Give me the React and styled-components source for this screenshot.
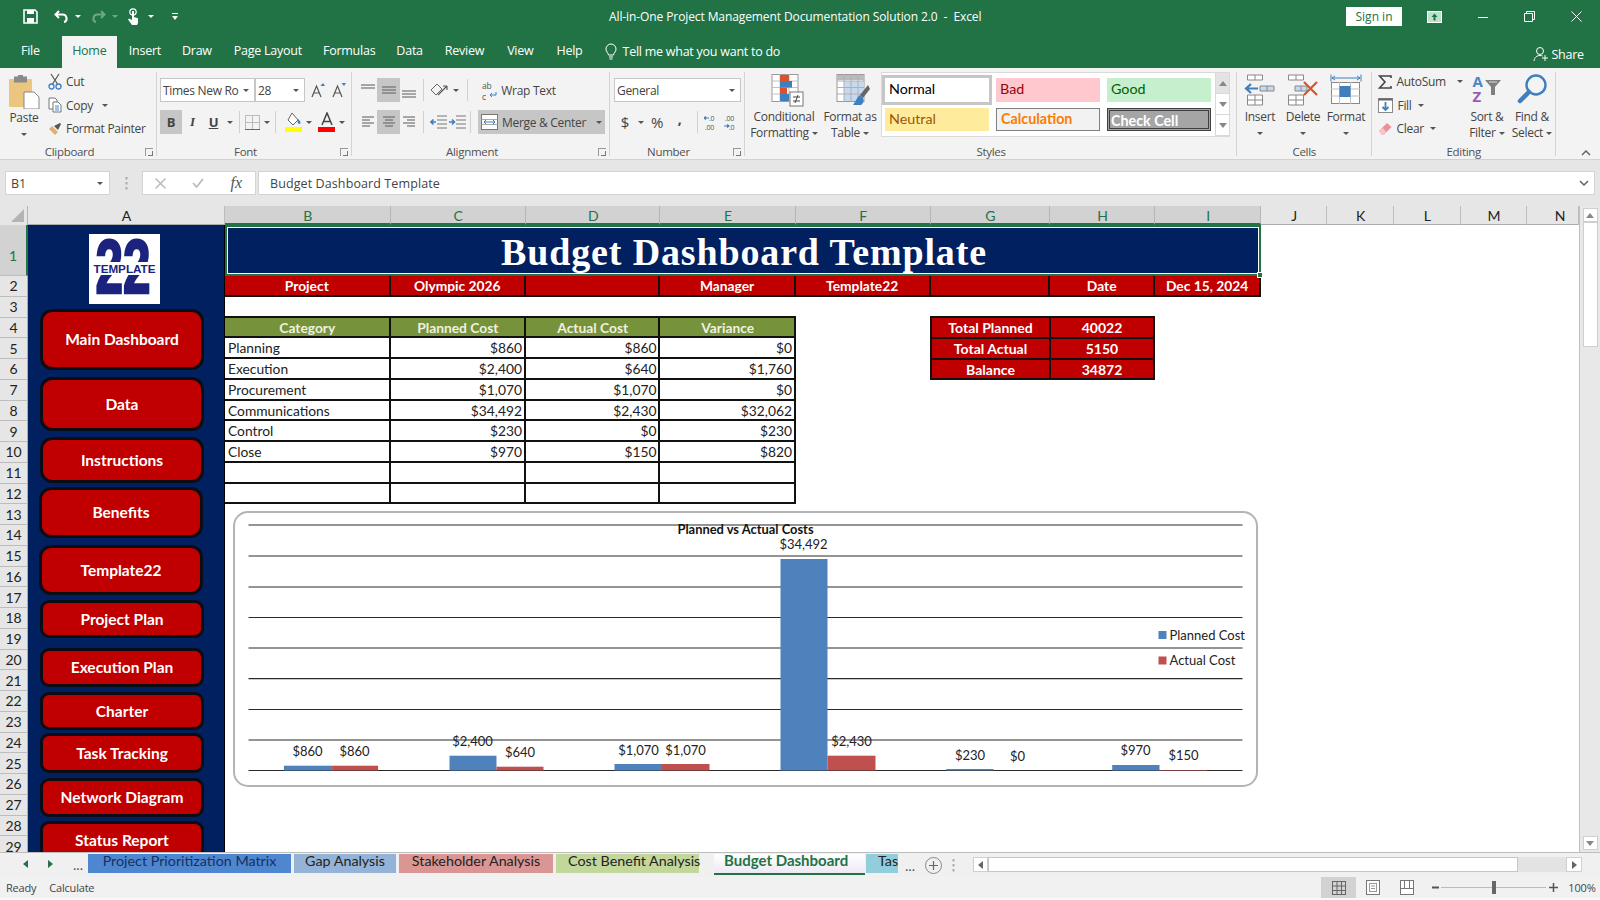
import React from "react";
import styled, { createGlobalStyle } from "styled-components";

const UI = '"Open Sans", "Noto Sans", sans-serif';
const CELL = 'Lato, "Liberation Sans", sans-serif';
const GREEN = "#217346";
const RED = "#c00000";
const NAVY = "#002060";

const Global = createGlobalStyle`
  html, body { margin: 0; padding: 0; background: #fff; }
  * { box-sizing: border-box; }
`;

const Page = styled.div`
  width: 1600px;
  height: 900px;
  overflow: hidden;
  display: flex;
  flex-direction: column;
  font-family: ${UI};
  background: #f1f1f1;
`;

/* ---------- title bar ---------- */
const TitleBar = styled.div`
  height: 36px;
  background: ${GREEN};
  display: flex;
  align-items: center;
  color: #fff;
  padding: 0 0 3px 23px;
`;
const Qat = styled.div`
  width: 586px;
  display: flex;
  align-items: center;
`;
const QatSlot = styled.span`
  display: flex;
  align-items: center;
  margin-right: ${(p) => p.$gap || 0}px;
`;
const WinTitle = styled.div`
  width: 737px;
  font-size: 12px;
  letter-spacing: -0.1px;
  white-space: nowrap;
`;
const SignIn = styled.div`
  width: 56px;
  height: 19px;
  background: #fff;
  color: ${GREEN};
  font-size: 12px;
  text-align: center;
  line-height: 19px;
  margin-right: 25px;
`;
const WinBtns = styled.div`
  display: flex;
  align-items: center;
  gap: 36px;
`;

/* ---------- tab row ---------- */
const TabRow = styled.div`
  height: 32px;
  background: ${GREEN};
  display: flex;
  align-items: flex-end;
  padding-left: 21px;
  color: #fff;
  font-size: 12.5px;
  letter-spacing: -0.25px;
`;
const RibbonTab = styled.div`
  height: 32px;
  line-height: 30px;
  white-space: nowrap;
  margin-right: ${(p) => p.$gap}px;
  ${(p) =>
    p.$active &&
    `background:#f3f3f3;color:${GREEN};width:55px;text-align:center;`}
`;
const TellMe = styled.div`
  display: flex;
  align-items: center;
  gap: 6px;
  height: 30px;
  align-self: flex-start;
  width: 928px;
  white-space: nowrap;
`;
const Share = styled.div`
  display: flex;
  align-items: center;
  gap: 3px;
  height: 32px;
  align-self: flex-start;
  padding-top: 4px;
`;

/* ---------- ribbon ---------- */
const Ribbon = styled.div`
  height: 92px;
  background: #f3f3f3;
  border-bottom: 1px solid #d2d2d2;
  display: flex;
  font-size: 12px;
  letter-spacing: -0.3px;
  color: #444;
`;
const Group = styled.div`
  width: ${(p) => p.$w}px;
  position: relative;
  display: flex;
  flex-direction: column;
  &::after {
    content: "";
    position: absolute;
    right: 0;
    top: 4px;
    bottom: 3px;
    width: 1px;
    background: ${(p) => (p.$plain ? "transparent" : "#d4d4d4")};
  }
`;
const GroupBody = styled.div`
  height: 76px;
  display: flex;
  padding-left: ${(p) => p.$pad || 0}px;
`;
const GroupLabel = styled.div`
  text-align: center;
  font-size: 11.5px;
  line-height: 15px;
  color: #505050;
  padding-right: ${(p) => p.$right || 0}px;
  padding-left: ${(p) => p.$leftPad || 0}px;
`;
const Launcher = styled.span`
  position: absolute;
  right: 4px;
  bottom: 3px;
  width: 8px;
  height: 8px;
  border-left: 1px solid #999;
  border-top: 1px solid #999;
  &::after {
    content: "";
    position: absolute;
    right: 0;
    bottom: 0;
    width: 4px;
    height: 4px;
    border-right: 1px solid #777;
    border-bottom: 1px solid #777;
  }
`;
const Caret = styled.span`
  display: inline-block;
  width: 0;
  height: 0;
  margin-left: ${(p) => p.$left || 0}px;
  border-left: 3px solid transparent;
  border-right: 3px solid transparent;
  border-top: 3px solid ${(p) => p.$color || "#555"};
  vertical-align: middle;
`;
const CaretLine = styled.div`
  height: 16px;
  line-height: 16px;
  text-align: center;
  white-space: nowrap;
`;
const BigBtn = styled.div`
  width: ${(p) => p.$w}px;
  margin-left: ${(p) => p.$left || 0}px;
  display: flex;
  flex-direction: column;
  align-items: center;
  padding-top: ${(p) => p.$top ?? 6}px;
  line-height: 16px;
  white-space: nowrap;
`;
const BigIcon = styled.div`
  height: 35px;
  padding-left: ${(p) => p.$shift || 0}px;
  display: flex;
  align-items: flex-start;
  justify-content: center;
`;
const SmallCol = styled.div`
  display: flex;
  flex-direction: column;
  padding-top: 2px;
  margin-left: ${(p) => p.$left || 0}px;
`;
const SmallRow = styled.div`
  height: 23.5px;
  display: flex;
  align-items: center;
  gap: ${(p) => p.$gap ?? 4}px;
  white-space: nowrap;
`;
const RowsCol = styled.div`
  display: flex;
  flex-direction: column;
  gap: 8px;
  padding-top: 10px;
`;
const ToolRow = styled.div`
  height: 24px;
  display: flex;
  align-items: center;
`;
const Tool = styled.div`
  width: ${(p) => p.$w}px;
  height: 24px;
  margin-left: ${(p) => p.$left || 0}px;
  display: flex;
  align-items: center;
  justify-content: center;
  gap: 4px;
  white-space: nowrap;
  background: ${(p) => (p.$on ? "#c6c6c6" : "transparent")};
`;
const Divider = styled.span`
  width: 1px;
  height: 22px;
  background: #d0d0d0;
  margin: 0 ${(p) => p.$m ?? 6}px;
`;
const Combo = styled.div`
  width: ${(p) => p.$w}px;
  height: 24px;
  background: #fff;
  border: 1px solid #c6c6c6;
  display: flex;
  align-items: center;
  justify-content: space-between;
  padding: 0 5px 0 2px;
  white-space: nowrap;
  overflow: hidden;
`;
const BoldGlyph = styled.span`
  font-family: ${(p) => p.$family || UI};
  font-weight: ${(p) => p.$weight || 700};
  font-style: ${(p) => (p.$italic ? "italic" : "normal")};
  text-decoration: ${(p) => (p.$under ? "underline" : "none")};
  font-size: ${(p) => p.$size || 13}px;
  color: ${(p) => p.$color || "#444"};
  margin-bottom: ${(p) => p.$lift || 0}px;
`;
const Gallery = styled.div`
  width: 349px;
  height: 65px;
  margin: 4px 0 0 3px;
  background: #fff;
  border: 1px solid #d9d9d9;
  display: flex;
`;
const StyleGrid = styled.div`
  width: 333px;
  padding: 5px 3px 3px;
  display: grid;
  grid-template-columns: repeat(3, 104px);
  grid-template-rows: 24px 23px;
  column-gap: 7px;
  row-gap: 6px;
`;
const StyleCell = styled.div`
  background: ${(p) => p.$bg};
  color: ${(p) => p.$fg};
  border: ${(p) => p.$border || "none"};
  font-family: ${CELL};
  font-size: 14.3px;
  letter-spacing: 0;
  font-weight: ${(p) => (p.$bold ? 700 : 400)};
  line-height: ${(p) => (p.$border ? 20 : 22)}px;
  padding-left: ${(p) => p.$pad ?? 4}px;
  box-shadow: ${(p) => p.$ring || "none"};
`;
const GalleryScroll = styled.div`
  flex: 1;
  display: flex;
  flex-direction: column;
  border-left: 1px solid #d9d9d9;
`;
const ScrollCell = styled.div`
  flex: 1;
  display: flex;
  align-items: center;
  justify-content: center;
  background: ${(p) => p.$bg || "#fff"};
  border-bottom: 1px solid #d9d9d9;
`;
const SortGlyphs = styled.div`
  height: 30px;
  display: flex;
  gap: 2px;
  font-family: ${UI};
  font-size: 15px;
  font-weight: 700;
  line-height: 15px;
`;
const SortLetters = styled.div`
  width: 11px;
  display: flex;
  flex-direction: column;
  color: #4a86c5;
`;
const SortZ = styled.span`
  color: #9b59b6;
`;
const FunnelSlot = styled.div`
  padding-top: 6px;
`;

/* ---------- formula bar ---------- */
const FormulaBar = styled.div`
  height: 46px;
  background: #e6e6e6;
  display: flex;
  align-items: center;
  padding-left: 5px;
  font-size: 13px;
  color: #444;
`;
const NameBox = styled.div`
  width: 105px;
  height: 24px;
  background: #fff;
  border: 1px solid #d4d4d4;
  display: flex;
  align-items: center;
  justify-content: space-between;
  padding: 0 6px 0 5px;
  font-size: 12.5px;
`;
const FnDots = styled.div`
  width: 32px;
  display: flex;
  justify-content: center;
`;
const FnBox = styled.div`
  width: 114px;
  height: 24px;
  background: #fff;
  border: 1px solid #d4d4d4;
  display: flex;
  align-items: center;
  justify-content: space-between;
  padding: 0 13px 0 12px;
  margin-right: 2px;
`;
const FnGlyph = styled.span`
  font-family: "Liberation Serif", serif;
  font-style: italic;
  font-size: 16px;
  color: #555;
`;
const FormulaInput = styled.div`
  width: 1337px;
  height: 24px;
  background: #fff;
  border: 1px solid #d4d4d4;
  display: flex;
  align-items: center;
  justify-content: space-between;
  padding: 0 5px 0 11px;
  font-size: 12.5px;
  letter-spacing: 0.1px;
`;

/* ---------- sheet frame ---------- */
const SheetFrame = styled.div`
  height: 646px;
  flex: none;
  display: flex;
`;
const SheetColumn = styled.div`
  width: 1579px;
  flex: none;
  display: flex;
  flex-direction: column;
`;
const ColHeaderRow = styled.div`
  height: 19px;
  flex: none;
  background: #e6e6e6;
  display: flex;
`;
const Corner = styled.div`
  width: 28px;
  position: relative;
  border-right: 1px solid #b5b5b5;
  &::after {
    content: "";
    position: absolute;
    right: 3px;
    bottom: 3px;
    width: 0;
    height: 0;
    border-left: 13px solid transparent;
    border-bottom: 13px solid #b4b4b4;
  }
`;
const ColHead = styled.div`
  width: ${(p) => p.$w}px;
  text-align: center;
  font-family: ${CELL};
  font-size: 14px;
  line-height: 19px;
  padding-left: ${(p) => p.$shift || 1}px;
  color: ${(p) => (p.$on ? GREEN : "#222")};
  background: ${(p) => (p.$on ? "#d2d2d2" : "#e6e6e6")};
  border-right: 1px solid ${(p) => (p.$on ? "#b5b5b5" : "#bdbdbd")};
  border-bottom: ${(p) =>
    p.$on ? `2px solid ${GREEN}` : "1px solid #ababab"};
`;
const SheetBody = styled.div`
  flex: 1;
  min-height: 0;
  display: flex;
  background: #fff;
`;
const RowHeads = styled.div`
  width: 28px;
  flex: none;
  display: flex;
  flex-direction: column;
  overflow: hidden;
`;
const RowHead = styled.div`
  height: ${(p) => p.$h}px;
  flex: none;
  display: flex;
  align-items: center;
  justify-content: center;
  padding-top: ${(p) => (p.$on ? 10 : 0)}px;
  font-family: ${CELL};
  font-size: 14px;
  color: ${(p) => (p.$on ? GREEN : "#222")};
  background: ${(p) => (p.$on ? "#d2d2d2" : "#e6e6e6")};
  border-bottom: 1px solid #bdbdbd;
  border-right: ${(p) =>
    p.$on ? `2px solid ${GREEN}` : "1px solid #ababab"};
`;

/* ---------- sidebar ---------- */
const Sidebar = styled.div`
  width: 197px;
  flex: none;
  background: ${NAVY};
  border-right: 1px solid #000;
  padding-top: 9px;
  overflow: hidden;
  display: flex;
  flex-direction: column;
`;
const LogoBox = styled.div`
  width: 71px;
  height: 70px;
  margin-left: 61px;
  background: #fff;
  flex: none;
`;
const NavButton = styled.div`
  width: 164px;
  height: ${(p) => p.$h}px;
  flex: none;
  margin-top: ${(p) => p.$gap}px;
  margin-left: ${(p) => p.$left}px;
  padding-bottom: 1px;
  background: ${RED};
  border: 3px solid #0c0c14;
  border-radius: ${(p) => (p.$h > 44 ? 12 : 9)}px;
  display: flex;
  align-items: center;
  justify-content: center;
  color: #fff;
  font-family: ${CELL};
  font-weight: 700;
  font-size: 15.5px;
`;

/* ---------- worksheet ---------- */
const Main = styled.div`
  flex: 1;
  min-width: 0;
  display: flex;
  flex-direction: column;
`;
const Banner = styled.div`
  width: 1036px;
  height: 51px;
  flex: none;
  padding-left: 2px;
  background: ${NAVY};
  border: 2px solid ${GREEN};
  outline: 1px solid #fff;
  outline-offset: -3px;
  color: #fff;
  font-family: "Liberation Serif", serif;
  font-weight: 700;
  font-size: 38px;
  letter-spacing: 0.85px;
  text-align: center;
  line-height: 50px;
  position: relative;
`;
const FillHandle = styled.span`
  position: absolute;
  right: -4px;
  bottom: -4px;
  width: 6px;
  height: 6px;
  background: ${GREEN};
  border: 1px solid #fff;
`;
const InfoRow = styled.div`
  width: 1036px;
  height: 21px;
  flex: none;
  display: grid;
  grid-template-columns: 165.6px 135.4px 134.5px 135.2px 134.9px 119.4px 105.5px 105.4px;
  background: ${RED};
  border-bottom: 2px solid #111;
`;
const InfoCell = styled.div`
  color: #fff;
  font-family: ${CELL};
  font-weight: 700;
  font-size: 13.8px;
  text-align: center;
  line-height: 20px;
  border-right: 2px solid #111;
`;
const TablesRow = styled.div`
  display: flex;
  align-items: flex-start;
  margin-top: 19px;
  flex: none;
`;
const DataTable = styled.div`
  width: 571px;
  display: grid;
  grid-template-columns: 165.6px 135.4px 134.5px 135.5px;
  border-top: 2px solid #111;
`;
const Cell = styled.div`
  height: ${(p) => (p.$first ? 20.25 : 20.75)}px;
  font-family: ${CELL};
  font-size: 13.8px;
  color: #222;
  line-height: 20px;
  padding: 0 2px 0 3px;
  text-align: ${(p) => p.$align || "left"};
  white-space: nowrap;
  border-right: 2px solid #111;
  border-bottom: 2px solid #111;
`;
const HeadCell = styled(Cell)`
  background: #76933c;
  color: #f0f0e0;
  font-weight: 700;
  text-align: center;
  line-height: 19px;
`;
const SummaryTable = styled.div`
  width: 225px;
  margin-left: 134px;
  display: grid;
  grid-template-columns: 119px 102px;
  border: 2px solid #111;
  border-bottom: none;
  background: ${RED};
`;
const SummaryCell = styled.div`
  height: 20.75px;
  color: #fff;
  font-family: ${CELL};
  font-size: 14px;
  font-weight: 700;
  text-align: center;
  line-height: 19px;
  border-bottom: 2px solid #111;
  border-right: ${(p) => (p.$left ? "2px solid #111" : "none")};
`;
const ChartBox = styled.div`
  width: 1025.5px;
  height: 276px;
  flex: none;
  margin: 6.75px 0 0 7.5px;
  background: #fff;
  border: 2px solid #b4b4b4;
  border-radius: 15px;
`;
const ChartSvg = styled.svg`
  display: block;
  font-family: ${CELL};
  font-size: 13px;
  fill: #222;
`;

/* ---------- scrollbars ---------- */
const VScroll = styled.div`
  width: 21px;
  flex: none;
  background: #e8e8e8;
  border-left: 1px solid #c0c0c0;
  display: flex;
  flex-direction: column;
  align-items: center;
  padding: 2px 0;
`;
const ScrollBtn = styled.div`
  width: ${(p) => p.$w || 15}px;
  height: ${(p) => p.$h || 14}px;
  margin-${(p) => (p.$axis === "x" ? "left" : "top")}: ${(p) =>
  p.$push ? "auto" : "0"};
  background: #fff;
  border: 1px solid #cfcfcf;
  display: flex;
  align-items: center;
  justify-content: center;
  flex: none;
`;
const VThumb = styled.div`
  width: 15px;
  height: 125px;
  background: #fff;
  border: 1px solid #cfcfcf;
  flex: none;
`;
const Tri = styled.span`
  width: 0;
  height: 0;
  ${(p) =>
    p.$dir === "up"
      ? "border-left:4px solid transparent;border-right:4px solid transparent;border-bottom:5px solid #888;"
      : p.$dir === "down"
      ? "border-left:4px solid transparent;border-right:4px solid transparent;border-top:5px solid #888;"
      : p.$dir === "left"
      ? `border-top:4px solid transparent;border-bottom:4px solid transparent;border-right:5px solid ${
          p.$color || "#666"
        };`
      : `border-top:4px solid transparent;border-bottom:4px solid transparent;border-left:5px solid ${
          p.$color || "#666"
        };`}
`;

/* ---------- sheet tabs ---------- */
const TabBar = styled.div`
  height: 25px;
  background: #f0f0f0;
  border-top: 1px solid #bdbdbd;
  display: flex;
  align-items: flex-start;
  font-family: ${CELL};
  font-size: 14.3px;
  flex: none;
`;
const TabNav = styled.div`
  width: 88px;
  height: 22px;
  display: flex;
  align-items: center;
  padding-left: 23px;
  gap: 20px;
  color: #555;
`;
const SheetTab = styled.div`
  width: ${(p) => p.$w}px;
  height: ${(p) => (p.$active ? 21 : 19)}px;
  margin-top: 1px;
  margin-right: ${(p) => p.$gap ?? 3}px;
  padding-left: ${(p) => p.$pad || 0}px;
  background: ${(p) => (p.$active ? "linear-gradient(#fff, #eee8f5)" : p.$bg)};
  color: ${(p) => (p.$active ? GREEN : p.$fg || "#222")};
  font-weight: ${(p) => (p.$active ? 700 : 400)};
  font-size: ${(p) => (p.$active ? 15 : 14.3)}px;
  text-align: ${(p) => (p.$pad ? "left" : "center")};
  line-height: 13px;
  white-space: nowrap;
  overflow: ${(p) => (p.$spill ? "visible" : "hidden")};
  border-bottom: ${(p) => (p.$active ? `2px solid ${GREEN}` : "none")};
`;
const TabExtras = styled.div`
  display: flex;
  align-items: center;
  height: 24px;
  width: 75px;
  color: #555;
  gap: 10px;
  padding-left: 7px;
`;
const HScroll = styled.div`
  width: 609px;
  height: 15px;
  margin-top: 4px;
  display: flex;
  background: #e3e3e3;
`;
const HThumb = styled.div`
  width: 530px;
  background: #fff;
  border: 1px solid #c6c6c6;
`;

/* ---------- status bar ---------- */
const StatusBar = styled.div`
  height: 23px;
  background: #f1f1f1;
  border-bottom: 2px solid #fbfbfb;
  display: flex;
  align-items: center;
  font-size: 11px;
  letter-spacing: -0.2px;
  color: #444;
  padding-left: 6px;
  flex: none;
`;
const StatusText = styled.span`
  margin-right: ${(p) => p.$gap}px;
`;
const ViewBtn = styled.div`
  width: ${(p) => p.$w}px;
  height: 21px;
  display: flex;
  align-items: center;
  justify-content: center;
  background: ${(p) => (p.$on ? "#d2d2d2" : "transparent")};
`;
const ZoomSlider = styled.div`
  width: 105px;
  height: 1px;
  margin: 0 3px 0 2px;
  background: #bbb;
  position: relative;
`;
const ZoomThumb = styled.span`
  position: absolute;
  left: 51px;
  top: -6px;
  width: 4px;
  height: 13px;
  background: #666;
`;
const ZoomGlyph = styled.span`
  display: flex;
  margin-left: ${(p) => p.$left || 0}px;
  margin-right: ${(p) => p.$right || 0}px;
`;

/* ---------- icons ---------- */
const Svg = ({ w, h, children, ...rest }) => (
  <svg width={w} height={h} viewBox={`0 0 ${w} ${h}`} {...rest}>
    {children}
  </svg>
);
const Lines = ({ rows, w = 16, h = 16, color = "#666" }) => (
  <Svg w={w} h={h}>
    {rows.map(([a, b, y], i) => (
      <line key={i} x1={a} x2={b} y1={y} y2={y} stroke={color} strokeWidth="1.1" />
    ))}
  </Svg>
);
const SaveIcon = () => (
  <Svg w={15} h={15}>
    <path d="M1 1h11l2 2v11H1z" fill="none" stroke="#fff" strokeWidth="1.6" />
    <rect x="4" y="1" width="7" height="4" fill="#fff" />
    <rect x="4" y="9" width="7" height="5" fill="#fff" />
  </Svg>
);
const UndoIcon = ({ color = "#fff", flip }) => (
  <Svg w={15} h={14} transform={flip ? "scale(-1 1)" : undefined}>
    <path
      d="M5 1 1.500 4.500 5 8M2 4.500h6.500a4 4 0 0 1 1.600 7.700"
      fill="none"
      stroke={color}
      strokeWidth="2"
    />
  </Svg>
);
const TouchIcon = () => (
  <Svg w={13} h={18}>
    <circle cx="6" cy="4" r="3.2" fill="none" stroke="#fff" strokeWidth="1.2" />
    <path d="M5 3h2v6l4 1.200V15l-1 2H5L1 11.500l1-1L5 12z" fill="#fff" />
  </Svg>
);
const QatMore = () => (
  <Svg w={8} h={9}>
    <path d="M1 1.500h6" stroke="#fff" strokeWidth="1" />
    <path d="M1 4h6L4 8z" fill="#fff" />
  </Svg>
);
const BoxArrow = () => (
  <Svg w={15} h={12}>
    <rect x=".5" y=".5" width="14" height="11" fill="#bfe0cf" stroke="#fff" />
    <path d="M7.500 2.500 4.500 6H6.500V9.500h2V6h2z" fill={GREEN} />
  </Svg>
);
const WinMin = () => (
  <Svg w={10} h={10}>
    <path d="M0 5.500h10" stroke="#fff" />
  </Svg>
);
const WinRestore = () => (
  <Svg w={11} h={11}>
    <path d="M.5 2.500h8v8h-8zM2.500 2.500v-2h8v8h-2" fill="none" stroke="#fff" />
  </Svg>
);
const WinClose = () => (
  <Svg w={11} h={11}>
    <path d="M.5.5l10 10M10.500.5l-10 10" stroke="#fff" />
  </Svg>
);
const Bulb = () => (
  <Svg w={12} h={17}>
    <path
      d="M3.500 12C3 9.500 1 8.800 1 6a5 5 0 0 1 10 0c0 2.800-2 3.500-2.500 6z"
      fill="none"
      stroke="#fff"
    />
    <path d="M4 14h4M4.500 16h3" stroke="#fff" />
  </Svg>
);
const ShareIcon = () => (
  <Svg w={16} h={16}>
    <circle cx="7" cy="5" r="3.500" fill="none" stroke="#fff" />
    <path d="M1 15c.5-4 3-5.500 6-5.500 1 0 1.800.2 2.500.5" fill="none" stroke="#fff" />
    <path d="M12 9v6M9 12h6" stroke="#fff" />
  </Svg>
);
const PasteIcon = () => (
  <Svg w={32} h={34}>
    <rect x="1" y="4" width="23" height="28" rx="1" fill="#eac67f" />
    <rect x="6" y="1.500" width="13" height="6" fill="#8a8a8a" />
    <rect x="10" y="0" width="5" height="3" fill="#8a8a8a" />
    <path d="M16 17h10l5 5v12H16z" fill="#fff" stroke="#888" />
  </Svg>
);
const CutIcon = () => (
  <Svg w={14} h={17}>
    <path d="M3 1l6.500 10M11 1 4.500 11" stroke="#555" strokeWidth="1.200" />
    <circle cx="3.500" cy="13.500" r="2.500" fill="none" stroke="#3f7fc0" strokeWidth="1.300" />
    <circle cx="10.500" cy="13.500" r="2.500" fill="none" stroke="#3f7fc0" strokeWidth="1.300" />
  </Svg>
);
const CopyIcon = () => (
  <Svg w={14} h={16}>
    <path d="M1 1h6l2 2v9H1z" fill="#fff" stroke="#777" />
    <path d="M5 5h5l3 3v7H5z" fill="#fff" stroke="#777" />
    <path d="M7 9h4M7 11h4M7 13h4" stroke="#4a86c5" />
  </Svg>
);
const PainterIcon = () => (
  <Svg w={14} h={14}>
    <path d="M1 7l6 6 3-3-6-6z" fill="#e0b070" />
    <path d="M6 4l4 4 3-6-1-1z" fill="#555" />
  </Svg>
);
const SizeIcon = ({ up }) => (
  <Svg w={14} h={15}>
    <path d="M1 14 5.500 3 10 14M3 10h5" fill="none" stroke="#555" strokeWidth="1.200" />
    <path d={up ? "M9.500 3l2.500-3 2 3z" : "M9.500 0h4.500l-2 3z"} fill="#3f7fc0" />
  </Svg>
);
const BorderIcon = () => (
  <Svg w={15} h={15}>
    <rect x=".5" y=".5" width="14" height="14" fill="none" stroke="#bbb" />
    <path d="M7.500 0v15M0 7.500h15" stroke="#bbb" />
    <path d="M0 14.500h15" stroke="#666" />
  </Svg>
);
const FillIcon = () => (
  <Svg w={18} h={20}>
    <path d="M7 1l6 7-5 5-5-5z" fill="#fff" stroke="#666" />
    <path d="M13 7c2 2 3 3 2 5-2 0-3-2-2-5z" fill="#3f7fc0" />
    <rect x="0" y="15" width="17" height="5" fill="#ffff00" />
  </Svg>
);
const FontColorIcon = () => (
  <Svg w={18} h={20}>
    <path d="M4 13 9 1l5 12M5.500 9.500h7" fill="none" stroke="#444" strokeWidth="1.500" />
    <rect x="0" y="15" width="17" height="5" fill="#ff0000" />
  </Svg>
);
const OrientIcon = () => (
  <Svg w={20} h={16}>
    <path d="M2 8 8 2l5 5-6 6z" fill="none" stroke="#666" />
    <path d="M9 13 18 4M18 4h-4M18 4v4" fill="none" stroke="#555" strokeWidth="1.100" />
  </Svg>
);
const WrapIcon = () => (
  <Svg w={15} h={21}>
    <text x="0" y="9" fontSize="8.5" fill="#555" fontFamily={UI}>ab</text>
    <text x="0" y="19.500" fontSize="8.5" fill="#555" fontFamily={UI}>c</text>
    <path d="M14 12v3H8M10 13l-2 2 2 2" fill="none" stroke="#3f7fc0" />
  </Svg>
);
const IndentIcon = ({ flip }) => (
  <Svg w={17} h={15}>
    <path d="M7 1h10M7 5h10M7 9h10M7 13h10" stroke="#777" />
    {flip ? (
      <path d="M0 7h5M3 4.500 5.500 7 3 9.500" fill="none" stroke="#3f7fc0" strokeWidth="1.600" />
    ) : (
      <path d="M6 7H1M3.500 4.500 1 7l2.500 2.500" fill="none" stroke="#3f7fc0" strokeWidth="1.600" />
    )}
  </Svg>
);
const MergeIcon = () => (
  <Svg w={17} h={16}>
    <rect x=".5" y=".5" width="16" height="15" fill="#fff" stroke="#777" />
    <path d="M.5 5.500h16M.5 10.500h16" stroke="#aaa" />
    <path d="M3 8h11M5 6 3 8l2 2M12 6l2 2-2 2" fill="none" stroke="#3f7fc0" />
  </Svg>
);
const DecimalIcon = ({ more }) => (
  <Svg w={16} h={18}>
    <text x={more ? 1 : 5} y="8" fontSize="7" fill="#555" fontFamily={UI}>{more ? ".00" : ".0"}</text>
    <text x={more ? 5 : 1} y="17" fontSize="7" fill="#555" fontFamily={UI}>{more ? ".0" : ".00"}</text>
    <path d={more ? "M0 13h5M3 11.500 5 13l-2 1.500" : "M0 5h5M2 3.500 0 5l2 1.500"} fill="none" stroke="#3f7fc0" strokeWidth="1.200" />
  </Svg>
);
const CondIcon = () => (
  <Svg w={34} h={33}>
    <rect x="2" y=".5" width="26" height="27" fill="#fff" stroke="#999" />
    <path d="M2 7h26M2 13.500h26M2 20h26M10 0v28M19 0v28" stroke="#c0c0c0" />
    <rect x="10" y="1" width="9" height="6" fill="#d9532c" />
    <rect x="10" y="7" width="12" height="6.500" fill="#3f7fc0" />
    <rect x="10" y="13.500" width="7" height="6.500" fill="#d9532c" />
    <rect x="10" y="20" width="9" height="7" fill="#3f7fc0" />
    <rect x="20" y="18" width="13" height="14" fill="#fff" stroke="#777" />
    <path d="M23 23h7M23 27h7M28 21l-3 8" stroke="#444" fill="none" />
  </Svg>
);
const TableIcon = () => (
  <Svg w={34} h={33}>
    <rect x="1" y=".5" width="27" height="27" fill="#fff" stroke="#999" />
    <rect x="1" y="1" width="27" height="5" fill="#bbb" />
    <rect x="8" y="7" width="20" height="20" fill="#c6d9ee" />
    <path d="M1 7h27M1 13.500h27M1 20h27M8 0v28M15 0v28M22 0v28" stroke="#b0b0b0" />
    <path d="M32 11 24 21l3 3 7-9z" fill="#666" />
    <path d="M24 21c-3 2-4 6-7 10h8c3-2 3-5 2-7z" fill="#3f7fc0" />
  </Svg>
);
const InsertIcon = () => (
  <Svg w={32} h={32}>
    <path d="M3.500 1h15v5h-15zM11 1v5" fill="#fff" stroke="#888" />
    <path d="M16 12h14v5H16zM23 12v5" fill="#c6d9ee" stroke="#888" />
    <path d="M3.500 21h15v10h-15zM3.500 26h15M11 21v10" fill="#fff" stroke="#888" />
    <path d="M14 14.500H2M7 10l-5 4.500L7 19" fill="none" stroke="#3f7fc0" strokeWidth="2.200" />
  </Svg>
);
const DeleteIcon = () => (
  <Svg w={32} h={32}>
    <path d="M1.500 1h15v5h-15zM9 1v5" fill="#fff" stroke="#888" />
    <path d="M8 12h12v5H8zM14 12v5" fill="#c6d9ee" stroke="#888" />
    <path d="M1.500 21h15v10h-15zM1.500 26h15M9 21v10" fill="#fff" stroke="#888" />
    <path d="M17 8l13 13M30 8 17 21" stroke="#d9532c" strokeWidth="2.200" />
  </Svg>
);
const FormatIcon = () => (
  <Svg w={32} h={32}>
    <path d="M2 4h28M5 2 2 4l3 2M27 2l3 2-3 2M1 .5v7M31 .5v7" fill="none" stroke="#3f7fc0" />
    <rect x="1.500" y="8.500" width="28" height="21" fill="#fff" stroke="#888" />
    <path d="M1 15h29M1 22h29M9.500 8v22M20.500 8v22" stroke="#c0c0c0" />
    <rect x="9.500" y="12" width="11" height="11" fill="#3f7fc0" />
  </Svg>
);
const SigmaIcon = () => (
  <Svg w={14} h={14}>
    <path d="M13 3V1H1.500L7 7 1.500 13H13v-2" fill="none" stroke="#444" strokeWidth="1.600" />
  </Svg>
);
const DownFillIcon = () => (
  <Svg w={15} h={15}>
    <rect x=".5" y=".5" width="14" height="14" fill="#fff" stroke="#888" />
    <rect x=".5" y=".5" width="14" height="2" fill="#666" />
    <path d="M7.500 4v8M4.500 9l3 3 3-3" fill="none" stroke="#3f7fc0" strokeWidth="1.800" />
  </Svg>
);
const EraserIcon = () => (
  <Svg w={14} h={14}>
    <path d="M1 9l8-8 4.500 4-8 8H4z" fill="#ef8f9a" />
    <path d="M1 9l3 4h1.500L8 10 5 6z" fill="#f7c4ca" />
  </Svg>
);
const FunnelIcon = () => (
  <Svg w={16} h={15}>
    <path d="M0 0h16L10 7v8H6V7z" fill="#7f7f7f" />
    <path d="M4 2h8" stroke="#ddd" />
  </Svg>
);
const FindIcon = () => (
  <Svg w={30} h={30}>
    <circle cx="19" cy="11" r="9.500" fill="none" stroke="#3f7fc0" strokeWidth="2.400" />
    <path d="M12 18 3 27" stroke="#3f7fc0" strokeWidth="4.500" strokeLinecap="round" />
  </Svg>
);
const Chevron = ({ up, color = "#666" }) => (
  <Svg w={10} h={6}>
    <path d={up ? "M1 5l4-4 4 4" : "M1 1l4 4 4-4"} fill="none" stroke={color} strokeWidth="1.500" />
  </Svg>
);
const CrossIcon = () => (
  <Svg w={11} h={11}>
    <path d="M.5.5l10 10M10.500.5l-10 10" stroke="#bbb" strokeWidth="1.500" />
  </Svg>
);
const CheckIcon = () => (
  <Svg w={12} h={10}>
    <path d="M1 5l3.500 4L11 1" fill="none" stroke="#bbb" strokeWidth="1.800" />
  </Svg>
);
const VDots = () => (
  <Svg w={3} h={13}>
    <path d="M1.500 0v2.500M1.500 5v2.500M1.500 10v2.500" stroke="#aaa" strokeWidth="2" />
  </Svg>
);
const GridIcon = () => (
  <Svg w={14} h={14}>
    <rect x=".5" y=".5" width="13" height="13" fill="none" stroke="#666" />
    <path d="M5 0v14M9.500 0v14M0 5h14M0 9.500h14" stroke="#666" />
  </Svg>
);
const PageIcon = () => (
  <Svg w={14} h={15}>
    <rect x=".5" y=".5" width="13" height="14" fill="#fff" stroke="#777" />
    <rect x="3.500" y="3.500" width="7" height="8" fill="none" stroke="#999" />
    <path d="M5 6h4M5 8.500h4" stroke="#999" />
  </Svg>
);
const BreakIcon = () => (
  <Svg w={14} h={15}>
    <rect x=".5" y=".5" width="13" height="14" fill="#fff" stroke="#777" />
    <path d="M4.500 0v8M9.500 0v8M0 8.500h14" stroke="#777" />
  </Svg>
);
const PlusCircle = () => (
  <Svg w={17} h={17}>
    <circle cx="8.500" cy="8.500" r="8" fill="none" stroke="#888" />
    <path d="M8.500 4v9M4 8.500h9" stroke="#666" strokeWidth="1.200" />
  </Svg>
);
const ZoomMinus = () => (
  <Svg w={7} h={9}>
    <path d="M0 4.500h7" stroke="#555" strokeWidth="2" />
  </Svg>
);
const ZoomPlus = () => (
  <Svg w={9} h={9}>
    <path d="M0 4.500h9M4.500 0v9" stroke="#555" strokeWidth="1.500" />
  </Svg>
);
const LogoMark = () => (
  <Svg w={71} h={70}>
    <text
      x="34"
      y="59"
      textAnchor="middle"
      fontFamily="'Liberation Sans', sans-serif"
      fontWeight="700"
      fontSize="76"
      fill="#1b237e"
      stroke="#1b237e"
      strokeWidth="2.500"
      textLength="55"
      lengthAdjust="spacingAndGlyphs"
    >
      22
    </text>
    <rect x="0" y="28" width="71" height="13" fill="#fff" />
    <text
      x="35.500"
      y="38.500"
      textAnchor="middle"
      fontFamily="'Liberation Sans', sans-serif"
      fontWeight="700"
      fontSize="11"
      fill="#1b237e"
      textLength="62"
      lengthAdjust="spacingAndGlyphs"
    >
      TEMPLATE
    </text>
  </Svg>
);

/* ---------- data ---------- */
const columns = [
  ["A", 197, false],
  ["B", 165.6, true],
  ["C", 135.4, true],
  ["D", 134.5, true],
  ["E", 135.2, true],
  ["F", 134.9, true],
  ["G", 119.4, true],
  ["H", 105.5, true],
  ["I", 105.4, true],
  ["J", 66.5, false],
  ["K", 66.5, false],
  ["L", 66.8, false],
  ["M", 66.5, false],
  ["N", 51.8, false, 15],
];
const navButtons = [
  ["Main Dashboard", 5, 12, 61],
  ["Data", 7, 12, 54],
  ["Instructions", 6, 12, 46],
  ["Benefits", 4, 11, 51],
  ["Template22", 7, 11, 50],
  ["Project Plan", 5, 12, 38],
  ["Execution Plan", 10, 12, 39],
  ["Charter", 5, 12, 38],
  ["Task Tracking", 3, 12, 40],
  ["Network Diagram", 5, 12, 39],
  ["Status Report", 4, 12, 38],
];
const budget = [
  ["Planning", "$860", "$860", "$0"],
  ["Execution", "$2,400", "$640", "$1,760"],
  ["Procurement", "$1,070", "$1,070", "$0"],
  ["Communications", "$34,492", "$2,430", "$32,062"],
  ["Control", "$230", "$0", "$230"],
  ["Close", "$970", "$150", "$820"],
  ["", "", "", ""],
  ["", "", "", ""],
];
const info = ["Project", "Olympic 2026", "", "Manager", "Template22", "", "Date", "Dec 15, 2024"];
const totals = [
  ["Total Planned", "40022"],
  ["Total Actual", "5150"],
  ["Balance", "34872"],
];
const gridLines = [525, 556, 587, 617.5, 648, 678.7, 709.5, 740, 770.5];
const bars = [
  [283.4, 48.2, 765.7, "#4f81bd", "$860", 307, 756],
  [331.6, 46, 765.7, "#c0504d", "$860", 354, 756],
  [449, 47, 755.7, "#4f81bd", "$2,400", 472, 746],
  [496, 47, 766.7, "#c0504d", "$640", 519.5, 757],
  [614, 47.5, 764, "#4f81bd", "$1,070", 638, 754.5],
  [661.5, 47.5, 764, "#c0504d", "$1,070", 685, 754.5],
  [780, 47, 559, "#4f81bd", "$34,492", 803, 549],
  [827, 48, 755.7, "#c0504d", "$2,430", 851, 746],
  [945.7, 47.3, 769, "#4f81bd", "$230", 969.5, 759.5],
  [993, 47, 770.5, "#c0504d", "$0", 1017, 761],
  [1111.7, 47.3, 765, "#4f81bd", "$970", 1135, 755],
  [1159, 47.7, 770, "#c0504d", "$150", 1183, 760],
];
const sheetTabs = [
  ["Project Prioritization Matrix", 203, "#4f86d0", "#17305f", 3, 0],
  ["Gap Analysis", 102, "#95b3d7", "#222", 3, 0],
  ["Stakeholder Analysis", 154, "#d99694", "#222", 3, 0],
  ["Cost Benefit Analysis", 143, "#c3d69b", "#222", 15, 12],
];

const Chart = () => (
  <ChartSvg width="1021.5" height="272" viewBox="234.5 513 1021.5 272">
    {gridLines.map((y) => (
      <line key={y} x1="248" x2="1242" y1={y} y2={y} stroke="#2a2a2a" strokeWidth="1.2" />
    ))}
    {bars.map(([x, w, top, color], i) => (
      <rect key={i} x={x} y={top} width={w} height={770.5 - top} fill={color} />
    ))}
    {bars.map(([, , , , label, x, y], i) => (
      <text key={i} x={x} y={y} textAnchor="middle">
        {label}
      </text>
    ))}
    <text x="745" y="534" textAnchor="middle" fontWeight="700" fontSize="12.9" fill="#111">
      Planned vs Actual Costs
    </text>
    <rect x="1158" y="631" width="8" height="8" fill="#4f81bd" />
    <text x="1169" y="639.5">Planned Cost</text>
    <rect x="1158" y="656.5" width="8" height="8" fill="#c0504d" />
    <text x="1169" y="664.5">Actual Cost</text>
  </ChartSvg>
);

const App = () => (
  <Page>
    <Global />
    <TitleBar>
      <Qat>
        <QatSlot $gap={16}><SaveIcon /></QatSlot>
        <QatSlot $gap={6}><UndoIcon /></QatSlot>
        <QatSlot $gap={10}><Caret $color="#fff" /></QatSlot>
        <QatSlot $gap={6}><UndoIcon color="#6ea88a" flip /></QatSlot>
        <QatSlot $gap={9}><Caret $color="#6ea88a" /></QatSlot>
        <QatSlot $gap={8}><TouchIcon /></QatSlot>
        <QatSlot $gap={17}><Caret $color="#fff" /></QatSlot>
        <QatSlot><QatMore /></QatSlot>
      </Qat>
      <WinTitle>All-in-One Project Management Documentation Solution 2.0&nbsp; -&nbsp; Excel</WinTitle>
      <SignIn>Sign in</SignIn>
      <WinBtns>
        <BoxArrow />
        <WinMin />
        <WinRestore />
        <WinClose />
      </WinBtns>
    </TitleBar>
    <TabRow>
      <RibbonTab $gap={22}>File</RibbonTab>
      <RibbonTab $gap={12} $active>Home</RibbonTab>
      <RibbonTab $gap={21}>Insert</RibbonTab>
      <RibbonTab $gap={22}>Draw</RibbonTab>
      <RibbonTab $gap={21}>Page Layout</RibbonTab>
      <RibbonTab $gap={21}>Formulas</RibbonTab>
      <RibbonTab $gap={22}>Data</RibbonTab>
      <RibbonTab $gap={23}>Review</RibbonTab>
      <RibbonTab $gap={23}>View</RibbonTab>
      <RibbonTab $gap={22}>Help</RibbonTab>
      <TellMe><Bulb />Tell me what you want to do</TellMe>
      <Share><ShareIcon />Share</Share>
    </TabRow>

    <Ribbon>
      <Group $w={157}>
        <GroupBody>
          <BigBtn $w={32} $left={8} $top={7}>
            <BigIcon><PasteIcon /></BigIcon>
            <span>Paste</span>
            <CaretLine><Caret /></CaretLine>
          </BigBtn>
          <SmallCol $left={8}>
            <SmallRow><CutIcon />Cut</SmallRow>
            <SmallRow><CopyIcon />Copy<Caret $left={5} /></SmallRow>
            <SmallRow><PainterIcon />Format Painter</SmallRow>
          </SmallCol>
        </GroupBody>
        <GroupLabel $right={18}>Clipboard</GroupLabel>
        <Launcher />
      </Group>
      <Group $w={195}>
        <GroupBody $pad={3}>
          <RowsCol>
            <ToolRow>
              <Combo $w={95}>Times New Ro<Caret /></Combo>
              <Combo $w={50}>28<Caret /></Combo>
              <Tool $w={21} $left={2}><SizeIcon up /></Tool>
              <Tool $w={21}><SizeIcon /></Tool>
            </ToolRow>
            <ToolRow>
              <Tool $w={22} $on><BoldGlyph>B</BoldGlyph></Tool>
              <Tool $w={21}><BoldGlyph $italic $family="'Liberation Serif', serif">I</BoldGlyph></Tool>
              <Tool $w={21}><BoldGlyph $under>U</BoldGlyph></Tool>
              <Tool $w={12}><Caret /></Tool>
              <Divider $m={3} />
              <Tool $w={28}><BorderIcon /><Caret /></Tool>
              <Divider $m={4} />
              <Tool $w={18} $left={5}><FillIcon /></Tool>
              <Tool $w={12}><Caret /></Tool>
              <Tool $w={18} $left={3}><FontColorIcon /></Tool>
              <Tool $w={12}><Caret /></Tool>
            </ToolRow>
          </RowsCol>
        </GroupBody>
        <GroupLabel $right={18}>Font</GroupLabel>
        <Launcher />
      </Group>
      <Group $w={258}>
        <GroupBody $pad={7}>
          <RowsCol>
            <ToolRow>
              <Tool $w={18}><Lines rows={[[1, 15, 3], [1, 15, 6]]} /></Tool>
              <Tool $w={23} $on><Lines rows={[[1, 15, 5], [1, 15, 8], [1, 15, 11]]} /></Tool>
              <Tool $w={18}><Lines rows={[[1, 15, 9], [1, 15, 12], [1, 15, 15]]} /></Tool>
              <Divider $m={5} />
              <Tool $w={30}><OrientIcon /><Caret /></Tool>
              <Divider $m={8} />
              <Tool $w={78} $left={4}><WrapIcon />Wrap Text</Tool>
            </ToolRow>
            <ToolRow>
              <Tool $w={18}><Lines rows={[[2, 14, 3], [2, 10, 6], [2, 14, 9], [2, 10, 12]]} /></Tool>
              <Tool $w={23} $on><Lines rows={[[2, 14, 3], [4, 12, 6], [2, 14, 9], [4, 12, 12]]} /></Tool>
              <Tool $w={18}><Lines rows={[[2, 14, 3], [6, 14, 6], [2, 14, 9], [6, 14, 12]]} /></Tool>
              <Divider $m={5} />
              <Tool $w={18}><IndentIcon /></Tool>
              <Tool $w={20}><IndentIcon flip /></Tool>
              <Divider $m={3} />
              <Tool $w={127} $left={4} $on><MergeIcon />Merge &amp; Center<Caret $left={6} /></Tool>
            </ToolRow>
          </RowsCol>
        </GroupBody>
        <GroupLabel $right={18}>Alignment</GroupLabel>
        <Launcher />
      </Group>
      <Group $w={135}>
        <GroupBody $pad={4}>
          <RowsCol>
            <ToolRow><Combo $w={127}>General<Caret /></Combo></ToolRow>
            <ToolRow>
              <Tool $w={20} $left={1}><BoldGlyph $size={15} $weight={400}>$</BoldGlyph></Tool>
              <Tool $w={12}><Caret /></Tool>
              <Tool $w={20}><BoldGlyph $size={15} $weight={400}>%</BoldGlyph></Tool>
              <Tool $w={25}><BoldGlyph $size={14} $lift={8}>,</BoldGlyph></Tool>
              <Divider $m={5} />
              <Tool $w={18}><DecimalIcon /></Tool>
              <Tool $w={22}><DecimalIcon more /></Tool>
            </ToolRow>
          </RowsCol>
        </GroupBody>
        <GroupLabel $right={18}>Number</GroupLabel>
        <Launcher />
      </Group>
      <Group $w={492}>
        <GroupBody $pad={5}>
          <BigBtn $w={68}>
            <BigIcon $shift={6}><CondIcon /></BigIcon>
            <span>Conditional</span>
            <CaretLine>Formatting<Caret $left={3} /></CaretLine>
          </BigBtn>
          <BigBtn $w={56} $left={4}>
            <BigIcon $shift={6}><TableIcon /></BigIcon>
            <span>Format as</span>
            <CaretLine>Table<Caret $left={3} /></CaretLine>
          </BigBtn>
          <Gallery>
            <StyleGrid>
              <StyleCell $bg="#fff" $fg="#000" $ring="0 0 0 3px #c6c6c6">Normal</StyleCell>
              <StyleCell $bg="#ffc7ce" $fg="#9c0006">Bad</StyleCell>
              <StyleCell $bg="#c6efce" $fg="#006100">Good</StyleCell>
              <StyleCell $bg="#ffeb9c" $fg="#9c5700">Neutral</StyleCell>
              <StyleCell $bg="#f2f2f2" $fg="#fa7d00" $bold $border="1px solid #7f7f7f">Calculation</StyleCell>
              <StyleCell $bg="#a5a5a5" $fg="#fff" $bold $pad={1} $border="3px double #3f3f3f">Check Cell</StyleCell>
            </StyleGrid>
            <GalleryScroll>
              <ScrollCell $bg="#e3e3e3"><Tri $dir="up" /></ScrollCell>
              <ScrollCell><Tri $dir="down" /></ScrollCell>
              <ScrollCell><Tri $dir="down" /></ScrollCell>
            </GalleryScroll>
          </Gallery>
        </GroupBody>
        <GroupLabel>Styles</GroupLabel>
      </Group>
      <Group $w={134.5}>
        <GroupBody $pad={2}>
          <BigBtn $w={42}>
            <BigIcon><InsertIcon /></BigIcon>
            <span>Insert</span>
            <CaretLine><Caret /></CaretLine>
          </BigBtn>
          <BigBtn $w={44}>
            <BigIcon><DeleteIcon /></BigIcon>
            <span>Delete</span>
            <CaretLine><Caret /></CaretLine>
          </BigBtn>
          <BigBtn $w={42}>
            <BigIcon><FormatIcon /></BigIcon>
            <span>Format</span>
            <CaretLine><Caret /></CaretLine>
          </BigBtn>
        </GroupBody>
        <GroupLabel>Cells</GroupLabel>
      </Group>
      <Group $w={184.5}>
        <GroupBody $pad={6}>
          <SmallCol>
            <SmallRow $gap={5}><SigmaIcon />AutoSum<Caret $left={6} /></SmallRow>
            <SmallRow $gap={5}><DownFillIcon />Fill<Caret $left={1} /></SmallRow>
            <SmallRow $gap={5}><EraserIcon />Clear<Caret $left={1} /></SmallRow>
          </SmallCol>
          <BigBtn $w={38} $left={5}>
            <BigIcon>
              <SortGlyphs>
                <SortLetters>A<SortZ>Z</SortZ></SortLetters>
                <FunnelSlot><FunnelIcon /></FunnelSlot>
              </SortGlyphs>
            </BigIcon>
            <span>Sort &amp;</span>
            <CaretLine>Filter<Caret $left={3} /></CaretLine>
          </BigBtn>
          <BigBtn $w={44} $left={4}>
            <BigIcon><FindIcon /></BigIcon>
            <span>Find &amp;</span>
            <CaretLine>Select<Caret $left={3} /></CaretLine>
          </BigBtn>
        </GroupBody>
        <GroupLabel>Editing</GroupLabel>
      </Group>
      <Group $w={44} $plain>
        <GroupBody />
        <GroupLabel $leftPad={16}><Chevron up /></GroupLabel>
      </Group>
    </Ribbon>

    <FormulaBar>
      <NameBox>B1<Caret /></NameBox>
      <FnDots><VDots /></FnDots>
      <FnBox><CrossIcon /><CheckIcon /><FnGlyph>fx</FnGlyph></FnBox>
      <FormulaInput>Budget Dashboard Template<Chevron /></FormulaInput>
    </FormulaBar>

    <SheetFrame>
      <SheetColumn>
        <ColHeaderRow>
          <Corner />
          {columns.map(([name, w, on, shift]) => (
            <ColHead key={name} $w={w} $on={on} $shift={shift}>{name}</ColHead>
          ))}
        </ColHeaderRow>
        <SheetBody>
          <RowHeads>
            {Array.from({ length: 29 }, (_, i) => (
              <RowHead key={i} $h={i === 0 ? 51 : 20.75} $on={i === 0}>{i + 1}</RowHead>
            ))}
          </RowHeads>
          <Sidebar>
            <LogoBox><LogoMark /></LogoBox>
            {navButtons.map(([label, gap, left, h]) => (
              <NavButton key={label} $gap={gap} $left={left} $h={h}>{label}</NavButton>
            ))}
          </Sidebar>
          <Main>
            <Banner>
              Budget Dashboard Template
              <FillHandle />
            </Banner>
            <InfoRow>
              {info.map((text, i) => (
                <InfoCell key={i}>{text}</InfoCell>
              ))}
            </InfoRow>
            <TablesRow>
              <DataTable>
                {["Category", "Planned Cost", "Actual Cost", "Variance"].map((h) => (
                  <HeadCell key={h} $first>{h}</HeadCell>
                ))}
                {budget.map((row, r) =>
                  row.map((text, c) => (
                    <Cell key={`${r}-${c}`} $align={c ? "right" : "left"}>{text}</Cell>
                  ))
                )}
              </DataTable>
              <SummaryTable>
                {totals.map(([label, value]) => (
                  <React.Fragment key={label}>
                    <SummaryCell $left>{label}</SummaryCell>
                    <SummaryCell>{value}</SummaryCell>
                  </React.Fragment>
                ))}
              </SummaryTable>
            </TablesRow>
            <ChartBox><Chart /></ChartBox>
          </Main>
        </SheetBody>
      </SheetColumn>
      <VScroll>
        <ScrollBtn><Tri $dir="up" /></ScrollBtn>
        <VThumb />
        <ScrollBtn $push><Tri $dir="down" /></ScrollBtn>
      </VScroll>
    </SheetFrame>

    <TabBar>
      <TabNav>
        <Tri $dir="left" $color={GREEN} />
        <Tri $dir="right" $color={GREEN} />
        <span>...</span>
      </TabNav>
      {sheetTabs.map(([name, w, bg, fg, gap, pad]) => (
        <SheetTab key={name} $w={w} $bg={bg} $fg={fg} $gap={gap} $pad={pad} $spill={pad > 0}>{name}</SheetTab>
      ))}
      <SheetTab $w={151} $active $gap={1} $pad={10}>Budget Dashboard</SheetTab>
      <SheetTab $w={32} $bg="#92cddc" $gap={0} $pad={12}>Tas</SheetTab>
      <TabExtras>
        <span>...</span>
        <PlusCircle />
        <VDots />
      </TabExtras>
      <HScroll>
        <ScrollBtn $w={15} $h={15}><Tri $dir="left" /></ScrollBtn>
        <HThumb />
        <ScrollBtn $w={16} $h={15} $axis="x" $push><Tri $dir="right" /></ScrollBtn>
      </HScroll>
    </TabBar>

    <StatusBar>
      <StatusText $gap={13}>Ready</StatusText>
      <StatusText $gap={1227}>Calculate</StatusText>
      <ViewBtn $w={35} $on><GridIcon /></ViewBtn>
      <ViewBtn $w={34}><PageIcon /></ViewBtn>
      <ViewBtn $w={34}><BreakIcon /></ViewBtn>
      <ZoomGlyph $left={8}><ZoomMinus /></ZoomGlyph>
      <ZoomSlider><ZoomThumb /></ZoomSlider>
      <ZoomGlyph $right={10}><ZoomPlus /></ZoomGlyph>
      <StatusText $gap={0}>100%</StatusText>
    </StatusBar>
  </Page>
);

export default App;
